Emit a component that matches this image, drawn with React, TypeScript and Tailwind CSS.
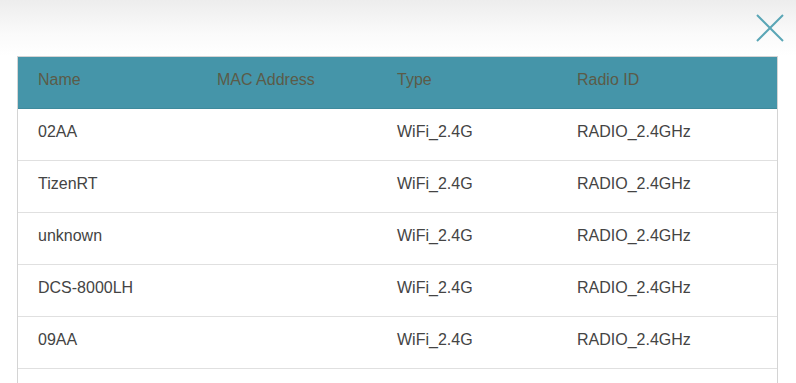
import React from "react";

const rows = [
  ["02AA", "", "WiFi_2.4G", "RADIO_2.4GHz"],
  ["TizenRT", "", "WiFi_2.4G", "RADIO_2.4GHz"],
  ["unknown", "", "WiFi_2.4G", "RADIO_2.4GHz"],
  ["DCS-8000LH", "", "WiFi_2.4G", "RADIO_2.4GHz"],
  ["09AA", "", "WiFi_2.4G", "RADIO_2.4GHz"],
  ["", "", "", ""],
];

export default function App() {
  return (
    <div
      className="w-[796px] h-[383px] overflow-hidden bg-white"
      style={{ fontFamily: '"Liberation Sans", Arial, sans-serif' }}
    >
      <div className="h-[56px] bg-gradient-to-b from-[#ededed] via-[#fafafa] via-60% to-white relative">
        <svg
          className="absolute left-[756px] top-[14px]"
          width="28"
          height="28"
          viewBox="0 0 28 28"
        >
          <path d="M1 1 L27 27 M27 1 L1 27" stroke="#5aa6b6" strokeWidth="2" fill="none" />
        </svg>
      </div>
      <div className="ml-[17px] w-[761px] border-l border-r border-t border-[#d4d4d4]">
        <div className="flex h-[52px] items-center pb-[6px] bg-[#4595a9] border-b border-[#3e8a9c] text-[16px] text-[#5b5b48]">
          <div className="w-[179px] pl-[20px]">Name</div>
          <div className="w-[180px] pl-[20px]">MAC Address</div>
          <div className="w-[180px] pl-[20px]">Type</div>
          <div className="flex-1 pl-[20px]">Radio ID</div>
        </div>
        {rows.map((r, i) => (
          <div
            key={i}
            className="flex h-[52px] items-center pb-[6px] border-b border-[#e0e0e0] text-[16px] text-[#444]"
          >
            <div className="w-[179px] pl-[20px]">{r[0]}</div>
            <div className="w-[180px] pl-[20px]">{r[1]}</div>
            <div className="w-[180px] pl-[20px]">{r[2]}</div>
            <div className="flex-1 pl-[20px]">{r[3]}</div>
          </div>
        ))}
      </div>
    </div>
  );
}
